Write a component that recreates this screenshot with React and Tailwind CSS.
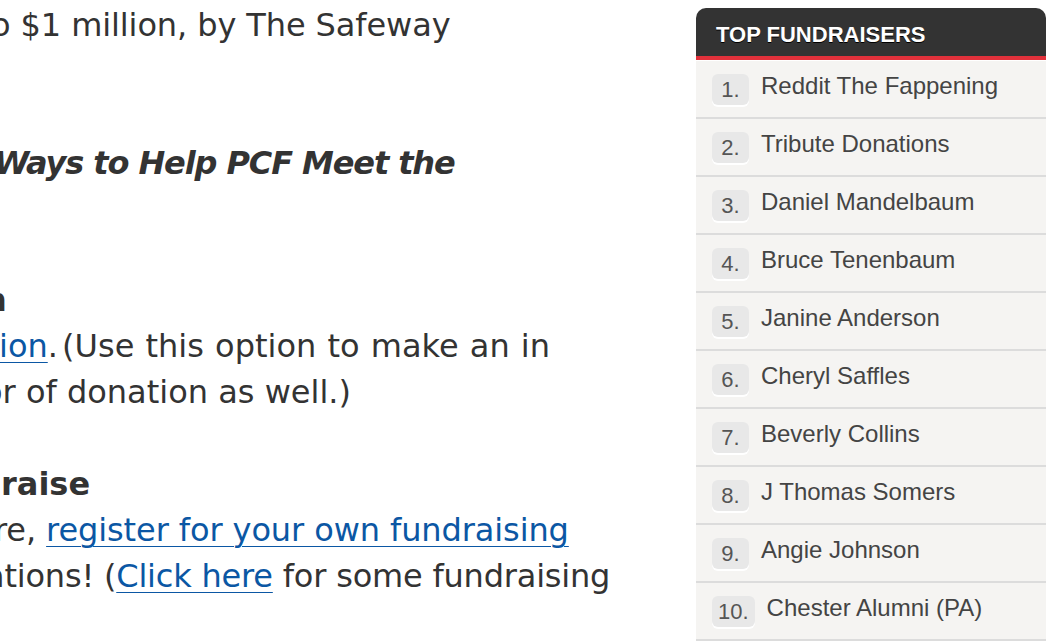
const fundraisers = [
  "Reddit The Fappening",
  "Tribute Donations",
  "Daniel Mandelbaum",
  "Bruce Tenenbaum",
  "Janine Anderson",
  "Cheryl Saffles",
  "Beverly Collins",
  "J Thomas Somers",
  "Angie Johnson",
  "Chester Alumni (PA)",
];

const body = "font-['DejaVu_Sans',Verdana,sans-serif] text-[#333]";
const link = "text-[#0b57a4] underline decoration-1 underline-offset-[5px]";

export default function App() {
  return (
    <div className="w-[1062px] h-[642px] overflow-hidden bg-white flex">
      {/* ARTICLE */}
      <main className={`w-[696px] shrink-0 overflow-hidden pt-[3px] text-[32px] leading-[46px] whitespace-nowrap ${body}`}>
        <div className="-ml-[9px] -mt-[1px] tracking-[-0.1px]">o $1 million, by The Safeway</div>
        <div className="h-[92px]" />
        <div className="-ml-[6px] font-bold italic tracking-[-1.1px]">Ways to Help PCF Meet the</div>
        <div className="h-[92px]" />
        <div className="-ml-[16px] font-bold -mt-[1px]">h</div>
        <div className="-ml-[1px] [word-spacing:1px]">
          <span className={link}>ion</span>.<span className="[word-spacing:-6px]"> </span>(Use this option to make an in
        </div>
        <div className="-ml-[17px]">or of donation as well.)</div>
        <div className="h-[46px]" />
        <div className="ml-[1px] font-bold">raise</div>
        <div className="-ml-[6px] tracking-[-0.1px]">
          re, <span className={link}>register for your own fundraising</span>
        </div>
        <div className="-ml-[15px] tracking-[-0.2px]">
          ations! (<span className={link}>Click here</span> for some fundraising
        </div>
      </main>

      {/* SIDEBAR */}
      <aside className="w-[350px] shrink-0 pt-2 font-['Liberation_Sans',Arial,sans-serif]">
        <div className="h-12 bg-[#333] rounded-t-[10px] border-b-4 border-[#e2313b] box-content flex items-center px-5">
          <h2 className="text-white font-bold text-[22px] mt-1 [text-shadow:0_1px_0_#000]">TOP FUNDRAISERS</h2>
        </div>
        <div className="h-px bg-white" />
        <ul>
          {fundraisers.map((name, i) => (
            <li
              key={name}
              className="h-[58px] bg-[#f5f4f2] border-b-2 border-[#dcdcdc] flex items-center gap-3 pl-4"
            >
              <span className="h-[31px] min-w-[37px] px-[6px] rounded-md bg-[#e8e8e8] shadow-[0_2px_0_#fff] flex items-center justify-center text-[22px] text-[#555]">
                {i + 1}.
              </span>
              <span className="text-[24px] text-[#444] -mt-[6px]">{name}</span>
            </li>
          ))}
        </ul>
      </aside>
    </div>
  );
}
